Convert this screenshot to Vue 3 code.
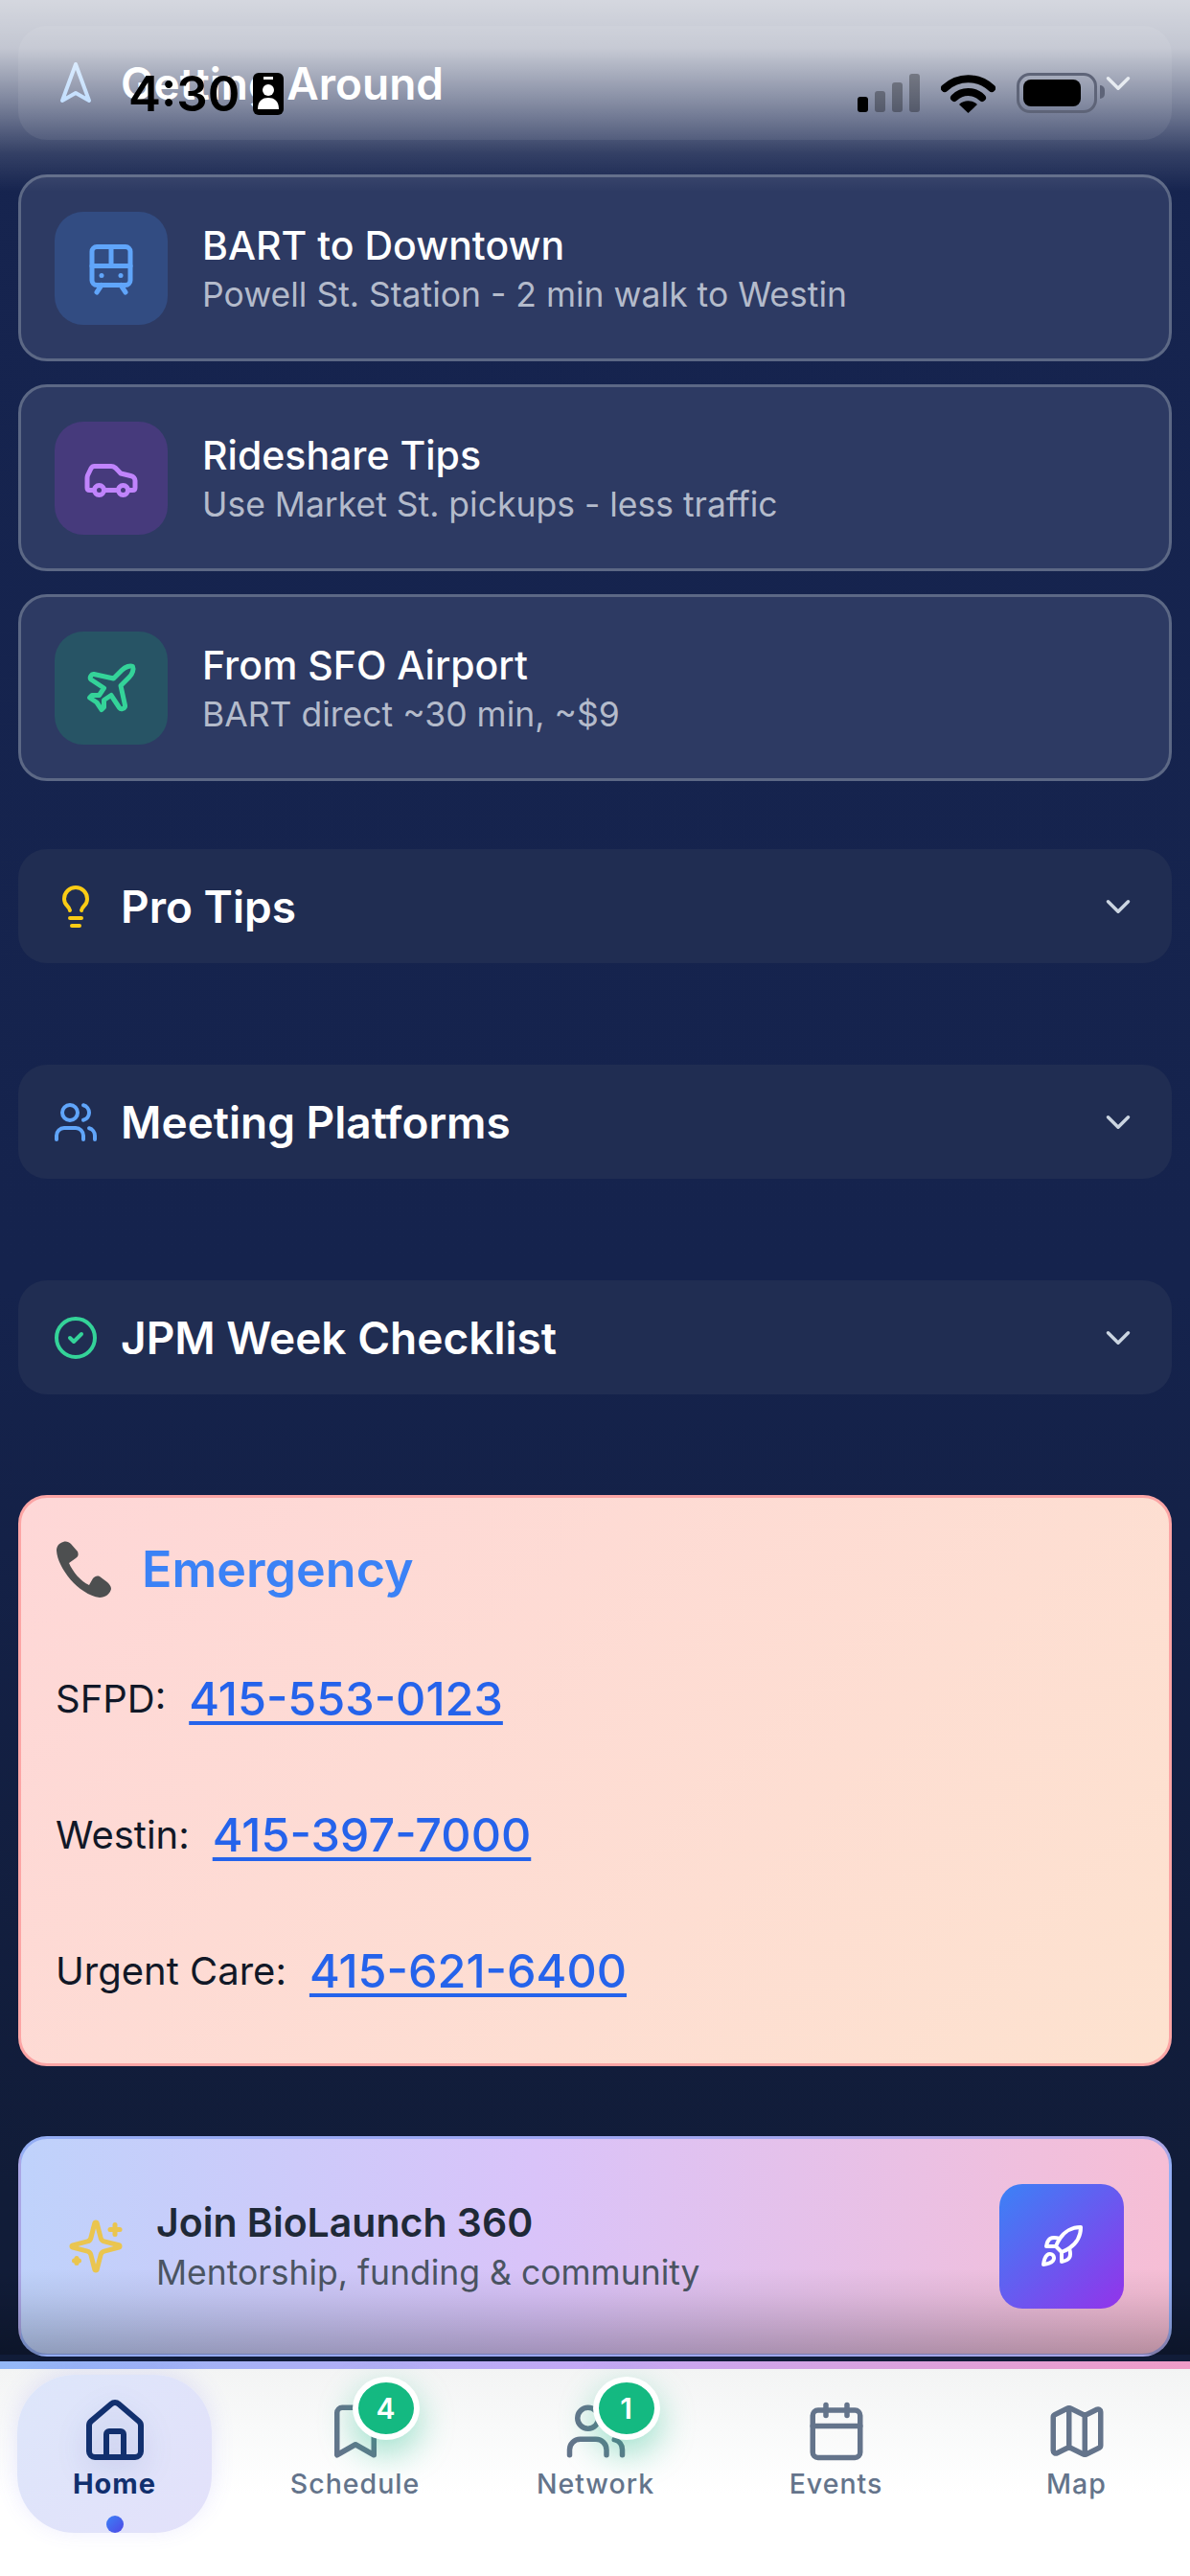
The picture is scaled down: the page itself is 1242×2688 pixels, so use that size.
<template>
  <div class="page">
    <main class="content">
      <div class="section-head first">
        <svg class="head-icon" viewBox="0 0 24 24" style="color: #93c5fd"><path v-for="d in icons.nav" :key="d" :d="d" /></svg>
        <span class="head-title">Getting Around</span>
        <svg class="chevron" viewBox="0 0 24 24"><path :d="icons.chevron[0]" /></svg>
      </div>

      <div class="transport">
        <div v-for="t in transport" :key="t.title" class="transport-card">
          <div class="tile" :class="t.tone">
            <svg viewBox="0 0 24 24"><path v-for="d in t.icon" :key="d" :d="d" /></svg>
          </div>
          <div class="transport-text">
            <div class="transport-title">{{ t.title }}</div>
            <div class="transport-sub">{{ t.sub }}</div>
          </div>
        </div>
      </div>

      <div v-for="s in sections" :key="s.title" class="section-head" :class="s.cls">
        <svg class="head-icon" viewBox="0 0 24 24" :style="{ color: s.color }"><path v-for="d in s.icon" :key="d" :d="d" /></svg>
        <span class="head-title">{{ s.title }}</span>
        <svg class="chevron" viewBox="0 0 24 24"><path :d="icons.chevron[0]" /></svg>
      </div>

      <section class="emergency">
        <div class="emergency-head">
          <svg class="phone" viewBox="0 0 60 60">
            <path fill="#4d4f50" d="M8 1C4 2 1 5 1 10 2 28 24 56 46 59 52 59 57 55 58 50 58 47 56 45 54 43L46 37C43 36 41 37 39 39L35 46C26 42 18 32 14 23L21 18C24 16 24 14 23 11L16 3C14 1 11 0 8 1Z" />
          </svg>
          <h2>Emergency</h2>
        </div>
        <p v-for="c in contacts" :key="c.label" class="contact">
          <span>{{ c.label }}:</span><a href="#">{{ c.phone }}</a>
        </p>
      </section>

      <section class="join">
        <svg class="sparkle" viewBox="0 0 24 24"><path v-for="d in icons.sparkles" :key="d" :d="d" /></svg>
        <div class="join-text">
          <div class="join-title">Join BioLaunch 360</div>
          <div class="join-sub">Mentorship, funding &amp; community</div>
        </div>
        <div class="rocket">
          <svg viewBox="0 0 24 24"><path v-for="d in icons.rocket" :key="d" :d="d" /></svg>
        </div>
      </section>

      <div class="bottom-fade"></div>
    </main>

    <nav class="tabbar">
      <div v-for="tab in tabs" :key="tab.label" class="tab" :class="{ active: tab.active }">
        <div class="tab-icon">
          <svg viewBox="0 0 24 24"><path v-for="d in tab.icon" :key="d" :d="d" /></svg>
          <span v-if="tab.badge" class="badge">{{ tab.badge }}</span>
        </div>
        <span class="tab-label">{{ tab.label }}</span>
        <span v-if="tab.active" class="dot"></span>
      </div>
    </nav>

    <div class="top-fade"></div>
    <div class="statusbar">
      <div class="status-left">
        <span class="time">4:30</span>
        <svg class="contact-card" viewBox="0 0 32 44">
          <rect width="32" height="44" rx="6" fill="#000" />
          <rect x="11" y="4" width="10" height="3" fill="#fff" />
          <circle cx="16" cy="18" r="6" fill="#fff" />
          <path fill="#fff" d="M5 38c0-9 5-12 11-12s11 3 11 12z" />
        </svg>
      </div>
      <div class="status-right">
        <div class="signal">
          <i class="on"></i><i></i><i></i><i></i>
        </div>
        <svg class="wifi" viewBox="0 0 57 41">
          <path d="M4 15C18 2 39 2 53 15" fill="none" stroke="#000" stroke-width="8" />
          <path d="M14 25C22 17 35 17 43 25" fill="none" stroke="#000" stroke-width="8" />
          <path d="M19 32C24 27 33 27 38 32L28.500 41Z" fill="#000" />
        </svg>
        <div class="battery"><div class="battery-fill"></div></div>
      </div>
    </div>
  </div>
</template>

<script setup>
function circle(cx, cy, r) {
  return `M${cx - r} ${cy}a${r} ${r} 0 1 0 ${r * 2} 0a${r} ${r} 0 1 0 ${-r * 2} 0z`
}

const icons = {
  chevron: ['m6 9 6 6 6-6'],
  nav: ['M12 2 19 21 12 17 5 21 12 2Z'],
  tram: ['M6 3h12a2 2 0 0 1 2 2v12a2 2 0 0 1-2 2H6a2 2 0 0 1-2-2V5a2 2 0 0 1 2-2z', 'M4 11h16', 'M12 3v8', 'm8 19-2 3', 'm18 22-2-3', 'M8 15h.01', 'M16 15h.01'],
  car: ['M19 17h2c.6 0 1-.4 1-1v-3c0-.9-.7-1.7-1.5-1.9C18.7 10.6 16 10 16 10s-1.3-1.4-2.2-2.3c-.5-.4-1.1-.7-1.8-.7H5c-.6 0-1.1.4-1.4.9l-1.4 2.9A3.7 3.7 0 0 0 2 12v4c0 .6.4 1 1 1h2', circle(7, 17, 2), 'M9 17h6', circle(17, 17, 2)],
  plane: ['M17.8 19.2 16 11l3.5-3.500C21 6 21.500 4 21 3c-1-.5-3 0-4.500 1.500L13 8 4.800 6.200c-.5-.1-.9.1-1.100.5l-.3.5c-.2.5-.1 1 .3 1.300L9 12l-2 3H4l-1 1 3 2 2 3 1-1v-3l3-2 3.500 5.300c.3.4.8.5 1.300.3l.5-.2c.4-.3.6-.7.5-1.200z'],
  bulb: ['M15 14c.2-1 .7-1.700 1.500-2.500 1-.9 1.500-2.200 1.500-3.500A6 6 0 0 0 6 8c0 1 .2 2.200 1.500 3.500.7.7 1.300 1.500 1.500 2.500', 'M9 18h6', 'M10 22h4'],
  users: ['M16 21v-2a4 4 0 0 0-4-4H6a4 4 0 0 0-4 4v2', circle(9, 7, 4), 'M22 21v-2a4 4 0 0 0-3-3.870', 'M16 3.130a4 4 0 0 1 0 7.750'],
  check: [circle(12, 12, 10), 'm9 12 2 2 4-4'],
  sparkles: ['M9.937 15.500A2 2 0 0 0 8.500 14.063l-6.135-1.582a.5.5 0 0 1 0-.962L8.500 9.936A2 2 0 0 0 9.937 8.500l1.582-6.135a.5.5 0 0 1 .963 0L14.063 8.500A2 2 0 0 0 15.500 9.937l6.135 1.581a.5.5 0 0 1 0 .964L15.500 14.063a2 2 0 0 0-1.437 1.437l-1.582 6.135a.5.5 0 0 1-.963 0z', 'M20 3v4', 'M22 5h-4', 'M4 17v2', 'M5 18H3'],
  rocket: ['M4.500 16.500c-1.500 1.260-2 5-2 5s3.740-.5 5-2c.71-.84.7-2.130-.09-2.910a2.180 2.180 0 0 0-2.910-.09z', 'm12 15-3-3a22 22 0 0 1 2-3.950A12.880 12.880 0 0 1 22 2c0 2.720-.78 7.500-6 11a22.350 22.350 0 0 1-4 2z', 'M9 12H4s.55-3.030 2-4c1.620-1.080 5 0 5 0', 'M12 15v5s3.030-.55 4-2c1.080-1.620 0-5 0-5'],
  house: ['M15 21v-8a1 1 0 0 0-1-1h-4a1 1 0 0 0-1 1v8', 'M3 10a2 2 0 0 1 .709-1.528l7-5.999a2 2 0 0 1 2.582 0l7 5.999A2 2 0 0 1 21 10v9a2 2 0 0 1-2 2H5a2 2 0 0 1-2-2z'],
  bookmark: ['m19 21-7-4-7 4V5a2 2 0 0 1 2-2h10a2 2 0 0 1 2 2v16z'],
  calendar: ['M8 2v4', 'M16 2v4', 'M5 4h14a2 2 0 0 1 2 2v14a2 2 0 0 1-2 2H5a2 2 0 0 1-2-2V6a2 2 0 0 1 2-2z', 'M3 10h18'],
  map: ['M14.106 5.553a2 2 0 0 0 1.788 0l3.659-1.830A1 1 0 0 1 21 4.619v12.764a1 1 0 0 1-.553.894l-4.553 2.277a2 2 0 0 1-1.788 0l-4.212-2.106a2 2 0 0 0-1.788 0l-3.659 1.830A1 1 0 0 1 3 19.381V6.618a1 1 0 0 1 .553-.894l4.553-2.277a2 2 0 0 1 1.788 0z', 'M15 5.764v15', 'M9 3.236v15'],
}

const transport = [
  { title: 'BART to Downtown', sub: 'Powell St. Station - 2 min walk to Westin', icon: icons.tram, tone: 'blue' },
  { title: 'Rideshare Tips', sub: 'Use Market St. pickups - less traffic', icon: icons.car, tone: 'purple' },
  { title: 'From SFO Airport', sub: 'BART direct ~30 min, ~$9', icon: icons.plane, tone: 'green' },
]

const sections = [
  { title: 'Pro Tips', icon: icons.bulb, color: '#facc15', cls: 'tips' },
  { title: 'Meeting Platforms', icon: icons.users, color: '#60a5fa', cls: 'spaced' },
  { title: 'JPM Week Checklist', icon: icons.check, color: '#34d399', cls: 'spaced' },
]

const contacts = [
  { label: 'SFPD', phone: '415-553-0123' },
  { label: 'Westin', phone: '415-397-7000' },
  { label: 'Urgent Care', phone: '415-621-6400' },
]

const tabs = [
  { label: 'Home', icon: icons.house, active: true },
  { label: 'Schedule', icon: icons.bookmark, badge: 4 },
  { label: 'Network', icon: icons.users, badge: 1 },
  { label: 'Events', icon: icons.calendar },
  { label: 'Map', icon: icons.map },
]
</script>

<style>
html, body {
  margin: 0;
  background: #111c38;
}
</style>

<style scoped>
.page {
  position: relative;
  width: 1242px;
  height: 2688px;
  overflow: hidden;
  display: flex;
  flex-direction: column;
  font-family: Inter, "Noto Sans", sans-serif;
  background: linear-gradient(180deg, #16244f 0%, #15234d 50%, #111c38 85%);
}

svg {
  display: block;
  fill: none;
  stroke: currentColor;
  stroke-linecap: round;
  stroke-linejoin: round;
}

.content {
  position: relative;
  flex: 1;
  padding: 27px 19px 0 19px;
  box-sizing: border-box;
}

.section-head {
  height: 119px;
  box-sizing: border-box;
  border-radius: 30px;
  background: #202d52;
  display: flex;
  align-items: center;
  padding: 0 36px;
}

.section-head.first {
  background: rgba(255, 255, 255, 0.07);
}

.section-head.tips {
  margin-top: 71px;
}

.section-head.spaced {
  margin-top: 106px;
}

.head-icon {
  width: 48px;
  height: 48px;
  stroke-width: 2;
  margin-right: 23px;
}

.head-title {
  flex: 1;
  color: #fff;
  font-size: 46px;
  font-weight: 600;
}

.chevron {
  width: 42px;
  height: 42px;
  stroke: #cbd5e1;
  stroke-width: 2;
  margin-right: -1px;
}

.transport {
  margin-top: 36px;
  display: flex;
  flex-direction: column;
  gap: 24px;
}

.transport-card {
  height: 195px;
  box-sizing: border-box;
  border: 3px solid #5c6885;
  border-radius: 30px;
  background: #2d3a63;
  display: flex;
  align-items: center;
  gap: 36px;
  padding-left: 35px;
}

.tile {
  width: 118px;
  height: 118px;
  border-radius: 30px;
  display: flex;
  align-items: center;
  justify-content: center;
}

.tile svg {
  width: 60px;
  height: 60px;
  stroke-width: 2;
}

.tile.blue { background: #324c82; color: #60a5fa; }
.tile.purple { background: #463a7c; color: #c084fc; }
.tile.green { background: #275465; color: #34d399; }

.transport-text {
  padding-top: 4px;
}

.transport-title {
  color: #fff;
  font-size: 41px;
  font-weight: 500;
  line-height: 52px;
}

.transport-sub {
  color: #b4bbcb;
  font-size: 35.500px;
  line-height: 52px;
}

.emergency {
  margin-top: 105px;
  height: 596px;
  box-sizing: border-box;
  border: 3px solid #fca5a5;
  border-radius: 30px;
  background: linear-gradient(135deg, #fed7d7 0%, #fde2cf 100%);
  padding: 43px 36px 0;
}

.emergency-head {
  display: flex;
  align-items: center;
  gap: 30px;
  margin-bottom: 77px;
}

.phone {
  width: 60px;
  height: 60px;
  stroke: none;
}

.emergency h2 {
  margin: 0;
  color: #3b82f6;
  font-size: 52px;
  font-weight: 600;
}

.contact {
  margin: 0 0 90px;
  height: 52px;
  display: flex;
  align-items: center;
  gap: 24px;
  color: #111827;
  font-size: 40px;
}

.contact a {
  color: #2563eb;
  font-size: 48.500px;
  font-weight: 500;
  text-decoration: underline;
  text-decoration-thickness: 4px;
  text-underline-offset: 6px;
}

.join {
  margin-top: 73px;
  height: 230px;
  box-sizing: border-box;
  border: 3px solid rgba(120, 150, 240, 0.6);
  border-radius: 30px;
  background: linear-gradient(90deg, #bfd2fb 0%, #d9c3f9 45%, #f6bed5 100%);
  display: flex;
  align-items: center;
  padding: 0 47px 0 48px;
}

.sparkle {
  width: 60px;
  height: 60px;
  stroke: #eac54f;
  stroke-width: 2;
  margin-right: 33px;
}

.join-text {
  flex: 1;
  padding-top: 4px;
}

.join-title {
  color: #1f2937;
  font-size: 41px;
  font-weight: 600;
  line-height: 52px;
}

.join-sub {
  color: #4b5563;
  font-size: 35.500px;
  line-height: 54px;
}

.rocket {
  position: relative;
  z-index: 1;
  width: 130px;
  height: 130px;
  border-radius: 24px;
  background: linear-gradient(135deg, #3b82f6, #9333ea);
  display: flex;
  align-items: center;
  justify-content: center;
  color: #fff;
}

.rocket svg {
  width: 48px;
  height: 48px;
  stroke-width: 2;
}

.bottom-fade {
  position: absolute;
  left: 0;
  right: 0;
  bottom: 7px;
  height: 90px;
  background: linear-gradient(180deg, rgba(0, 0, 0, 0) 0, rgba(0, 0, 0, 0.05) 30%, rgba(0, 0, 0, 0.15) 65%, rgba(0, 0, 0, 0.26) 100%);
}

.tabbar {
  position: relative;
  height: 224px;
  box-sizing: border-box;
  padding: 6px 17px 0 18px;
  border-top: 8px solid;
  border-image: linear-gradient(90deg, #93b8f7, #c4a8f5 50%, #f09cc8) 1;
  background: linear-gradient(180deg, #f3f4f4 0%, #f9fafa 30%, #ffffff 60%);
  display: grid;
  grid-template-columns: repeat(5, 203px);
  justify-content: space-between;
  align-items: start;
}

.tab {
  position: relative;
  height: 165px;
  border-radius: 60px;
  display: flex;
  flex-direction: column;
  align-items: center;
  color: #64748b;
}

.tab.active {
  color: #12306e;
  background: linear-gradient(135deg, #dde6fa, #e3e1fa);
  box-shadow: 0 -4px 24px rgba(99, 102, 241, 0.14);
}

.tab-icon {
  position: relative;
  margin-top: 26px;
}

.tab-icon svg {
  width: 66px;
  height: 66px;
  stroke-width: 2;
}

.tab.active .tab-icon {
  margin-top: 23px;
}

.tab.active .tab-icon svg {
  width: 72px;
  height: 72px;
  filter: drop-shadow(0 10px 14px rgba(30, 58, 138, 0.18));
}

.badge {
  position: absolute;
  top: -24px;
  left: 30px;
  width: 58px;
  height: 54px;
  border: 6px solid #fff;
  border-radius: 50%;
  background: #14b981;
  color: #fff;
  font-size: 30px;
  font-weight: 600;
  display: flex;
  align-items: center;
  justify-content: center;
  box-shadow: 0 14px 36px rgba(16, 185, 129, 0.4);
}

.tab-label {
  margin-top: 2px;
  font-size: 28.500px;
  font-weight: 500;
  letter-spacing: 1px;
  line-height: 40px;
}

.tab.active .tab-label {
  font-size: 29px;
  font-weight: 700;
  margin-top: -1px;
}

.dot {
  position: absolute;
  bottom: 0;
  width: 18px;
  height: 18px;
  border-radius: 50%;
  background: linear-gradient(135deg, #3b82f6, #4f46e5);
}

.top-fade {
  position: absolute;
  top: 0;
  left: 0;
  right: 0;
  height: 200px;
  pointer-events: none;
  background: linear-gradient(180deg, rgba(255, 255, 255, 0.82) 0, rgba(255, 255, 255, 0.74) 50px, rgba(255, 255, 255, 0.42) 110px, rgba(255, 255, 255, 0.13) 160px, rgba(255, 255, 255, 0) 200px);
}

.statusbar {
  position: absolute;
  top: 0;
  left: 0;
  right: 0;
  display: flex;
  justify-content: space-between;
  padding: 76px 97px 0 134px;
}

.status-left {
  display: flex;
  align-items: center;
  gap: 14px;
}

.time {
  color: #000;
  font-size: 51px;
  font-weight: 600;
  line-height: 44px;
}

.contact-card {
  width: 32px;
  height: 44px;
  stroke: none;
}

.status-right {
  display: flex;
  align-items: center;
  gap: 22px;
  margin-top: -2px;
}

.signal {
  display: flex;
  align-items: flex-end;
  gap: 7px;
  height: 40px;
}

.signal i {
  width: 11px;
  border-radius: 3px;
  background: rgba(0, 0, 0, 0.3);
}

.signal i:nth-child(1) { height: 16px; background: #000; }
.signal i:nth-child(2) { height: 22px; }
.signal i:nth-child(3) { height: 31px; }
.signal i:nth-child(4) { height: 40px; }

.wifi {
  width: 57px;
  height: 41px;
  stroke: none;
}

.battery {
  position: relative;
  width: 84px;
  height: 42px;
  box-sizing: border-box;
  border: 3px solid #5e6478;
  border-radius: 14px;
  padding: 4px;
}

.battery::after {
  content: "";
  position: absolute;
  right: -11px;
  top: 10px;
  width: 5px;
  height: 14px;
  border-radius: 0 6px 6px 0;
  background: #5e6478;
}

.battery-fill {
  width: 60px;
  height: 28px;
  border-radius: 8px;
  background: #000;
}
</style>
